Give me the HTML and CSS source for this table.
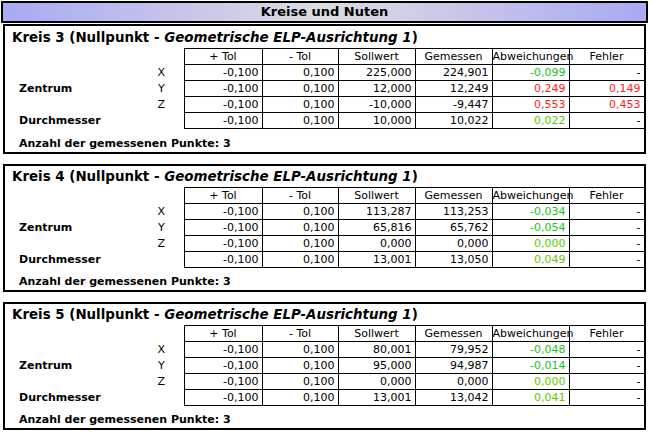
FILE: index.html
```html
<!DOCTYPE html>
<html lang="de">
<head>
<meta charset="utf-8">
<title>Kreise und Nuten</title>
<link rel="stylesheet" href="styles.css">
</head>
<body>
<div class="page-title">Kreise und Nuten</div>

<section class="box">
  <div class="box-title first">Kreis 3 (Nullpunkt - <em>Geometrische ELP-Ausrichtung 1</em>)</div>
  <table class="grid">
    <colgroup><col class="c-label"><col class="c-axis"><col class="c1"><col class="c2"><col class="c3"><col class="c4"><col class="c5"><col class="c6"></colgroup>
    <tr class="head"><td></td><td></td><th>+ Tol</th><th>- Tol</th><th>Sollwert</th><th>Gemessen</th><th>Abweichungen</th><th>Fehler</th></tr>
    <tr><td class="label" rowspan="3">Zentrum</td><td class="axis">X</td><td class="v">-0,100</td><td class="v">0,100</td><td class="v">225,000</td><td class="v">224,901</td><td class="v ok-n">-0,099</td><td class="v">-</td></tr>
    <tr><td class="axis">Y</td><td class="v">-0,100</td><td class="v">0,100</td><td class="v">12,000</td><td class="v">12,249</td><td class="v bad">0,249</td><td class="v bad">0,149</td></tr>
    <tr><td class="axis">Z</td><td class="v">-0,100</td><td class="v">0,100</td><td class="v">-10,000</td><td class="v">-9,447</td><td class="v bad">0,553</td><td class="v bad">0,453</td></tr>
    <tr><td class="label">Durchmesser</td><td class="axis"></td><td class="v">-0,100</td><td class="v">0,100</td><td class="v">10,000</td><td class="v">10,022</td><td class="v ok-p">0,022</td><td class="v">-</td></tr>
  </table>
  <div class="box-foot first">Anzahl der gemessenen Punkte: 3</div>
</section>

<section class="box">
  <div class="box-title">Kreis 4 (Nullpunkt - <em>Geometrische ELP-Ausrichtung 1</em>)</div>
  <table class="grid">
    <colgroup><col class="c-label"><col class="c-axis"><col class="c1"><col class="c2"><col class="c3"><col class="c4"><col class="c5"><col class="c6"></colgroup>
    <tr class="head"><td></td><td></td><th>+ Tol</th><th>- Tol</th><th>Sollwert</th><th>Gemessen</th><th>Abweichungen</th><th>Fehler</th></tr>
    <tr><td class="label" rowspan="3">Zentrum</td><td class="axis">X</td><td class="v">-0,100</td><td class="v">0,100</td><td class="v">113,287</td><td class="v">113,253</td><td class="v ok-n">-0,034</td><td class="v">-</td></tr>
    <tr><td class="axis">Y</td><td class="v">-0,100</td><td class="v">0,100</td><td class="v">65,816</td><td class="v">65,762</td><td class="v ok-n">-0,054</td><td class="v">-</td></tr>
    <tr><td class="axis">Z</td><td class="v">-0,100</td><td class="v">0,100</td><td class="v">0,000</td><td class="v">0,000</td><td class="v ok-p">0,000</td><td class="v">-</td></tr>
    <tr><td class="label">Durchmesser</td><td class="axis"></td><td class="v">-0,100</td><td class="v">0,100</td><td class="v">13,001</td><td class="v">13,050</td><td class="v ok-p">0,049</td><td class="v">-</td></tr>
  </table>
  <div class="box-foot">Anzahl der gemessenen Punkte: 3</div>
</section>

<section class="box">
  <div class="box-title">Kreis 5 (Nullpunkt - <em>Geometrische ELP-Ausrichtung 1</em>)</div>
  <table class="grid">
    <colgroup><col class="c-label"><col class="c-axis"><col class="c1"><col class="c2"><col class="c3"><col class="c4"><col class="c5"><col class="c6"></colgroup>
    <tr class="head"><td></td><td></td><th>+ Tol</th><th>- Tol</th><th>Sollwert</th><th>Gemessen</th><th>Abweichungen</th><th>Fehler</th></tr>
    <tr><td class="label" rowspan="3">Zentrum</td><td class="axis">X</td><td class="v">-0,100</td><td class="v">0,100</td><td class="v">80,001</td><td class="v">79,952</td><td class="v ok-n">-0,048</td><td class="v">-</td></tr>
    <tr><td class="axis">Y</td><td class="v">-0,100</td><td class="v">0,100</td><td class="v">95,000</td><td class="v">94,987</td><td class="v ok-n">-0,014</td><td class="v">-</td></tr>
    <tr><td class="axis">Z</td><td class="v">-0,100</td><td class="v">0,100</td><td class="v">0,000</td><td class="v">0,000</td><td class="v ok-p">0,000</td><td class="v">-</td></tr>
    <tr><td class="label">Durchmesser</td><td class="axis"></td><td class="v">-0,100</td><td class="v">0,100</td><td class="v">13,001</td><td class="v">13,042</td><td class="v ok-p">0,041</td><td class="v">-</td></tr>
  </table>
  <div class="box-foot">Anzahl der gemessenen Punkte: 3</div>
</section>
</body>
</html>
```
FILE: styles.css
```css
html, body {
  margin: 0;
  padding: 0;
  background: #ffffff;
}
body {
  font-family: "DejaVu Sans", Verdana, sans-serif;
  color: #000000;
  font-size: 11px;
}
.page-title {
  margin: 1px 4px 1px 1px;
  height: 18px;
  line-height: 18px;
  border: 2px solid #000000;
  background: linear-gradient(to right, #a9a9f4 0%, #dcdce2 50%, #a9a9f4 100%);
  text-align: center;
  font-weight: bold;
  font-size: 13px;
}
.box {
  margin: 0 6px 10px 3px;
  border: 2px solid #000000;
}
.box-title {
  height: 21px;
  line-height: 22px;
  padding-left: 7px;
  font-weight: bold;
  font-size: 13.4px;
  white-space: nowrap;
}
.box-title.first {
  height: 22px;
  line-height: 23px;
}
.box-title em {
  font-style: italic;
}
.grid {
  width: 100%;
  table-layout: fixed;
  border-collapse: collapse;
  font-size: 11px;
}
.c-label { width: 140px; }
.c-axis { width: 39px; }
.c1 { width: 78px; }
.c2 { width: 76px; }
.c3 { width: 77px; }
.c4 { width: 77px; }
.c5 { width: 77px; }
.c6 { width: 75px; }
.grid td, .grid th {
  padding: 0;
  height: 15px;
  line-height: 15px;
  white-space: nowrap;
}
.grid th {
  font-weight: normal;
  text-align: center;
  border: 1px solid #000000;
  overflow: visible;
}
.grid .label {
  font-weight: bold;
  padding-left: 14px;
  vertical-align: middle;
}
.grid .axis {
  text-align: center;
  padding-right: 6px;
}
.grid .v {
  border: 1px solid #000000;
  text-align: right;
  padding-right: 3px;
}
.grid .ok-n { color: #1cc41c; }
.grid .ok-p { color: #5ccc00; }
.grid .bad { color: #ff1e1e; }
.box-foot {
  height: 22px;
  line-height: 14px;
  padding-top: 7px;
  box-sizing: border-box;
  padding-left: 14px;
  font-weight: bold;
}
.box-foot.first {
  height: 23px;
  padding-top: 8px;
}
```
